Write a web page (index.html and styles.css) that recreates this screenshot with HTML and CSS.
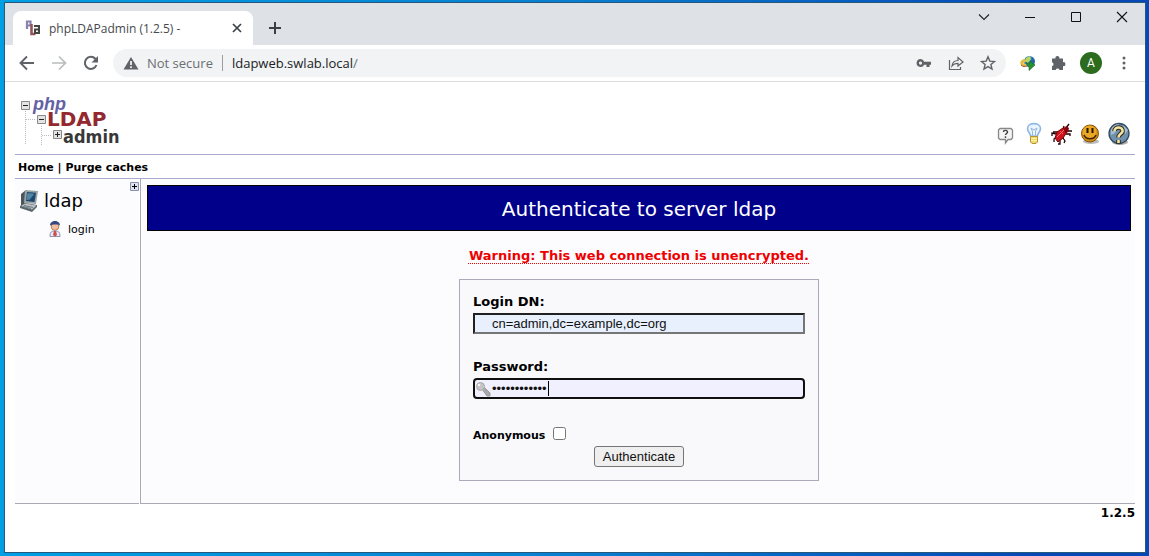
FILE: index.html
```html
<!DOCTYPE html>
<html lang="en">
<head>
<meta charset="utf-8">
<title>phpLDAPadmin (1.2.5) -</title>
<link rel="stylesheet" href="styles.css">
</head>
<body>
<div class="window">
  <header class="tabstrip">
    <div class="tab">
      <svg class="favicon" width="16" height="16" viewBox="0 0 16 16" aria-hidden="true"><path d="M2 9V1.500h3.500v4H2" fill="none" stroke="#8583ad" stroke-width="2.200"/><path d="M6.500 4v10h4" fill="none" stroke="#95545b" stroke-width="2.600"/><path d="M9 6h5v7h-4V9.500h4" fill="none" stroke="#444" stroke-width="2"/></svg>
      <span class="tab-title">phpLDAPadmin (1.2.5) -</span>
      <button class="icon-btn tab-close" aria-label="Close tab"><svg width="10" height="10" viewBox="0 0 10 10"><path d="M1 1l8 8M9 1L1 9" stroke="#3c4043" stroke-width="1.700"/></svg></button>
    </div>
    <button class="icon-btn new-tab" aria-label="New tab"><svg width="12" height="12" viewBox="0 0 12 12"><path d="M6 0v12M0 6h12" stroke="#3c4043" stroke-width="2"/></svg></button>
    <div class="window-controls">
      <button class="icon-btn" aria-label="Search tabs"><svg width="12" height="12" viewBox="0 0 12 12"><path d="M1 3.500l5 5 5-5" fill="none" stroke="#222" stroke-width="1.100"/></svg></button>
      <button class="icon-btn" aria-label="Minimize"><svg width="12" height="12" viewBox="0 0 12 12"><path d="M1 6.500h10" stroke="#111"/></svg></button>
      <button class="icon-btn" aria-label="Maximize"><svg width="12" height="12" viewBox="0 0 12 12"><path d="M1.500 1.500h9v9h-9z" fill="none" stroke="#111"/></svg></button>
      <button class="icon-btn" aria-label="Close"><svg width="12" height="12" viewBox="0 0 12 12"><path d="M1 1l10 10M11 1L1 11" stroke="#111" stroke-width="1.100"/></svg></button>
    </div>
  </header>
  <div class="toolbar">
    <button class="icon-btn" aria-label="Back"><svg width="16" height="16" viewBox="0 0 16 16"><path d="M15 8H2M8 1.500L1.500 8 8 14.500" fill="none" stroke="#5f6368" stroke-width="1.900"/></svg></button>
    <button class="icon-btn" aria-label="Forward"><svg width="16" height="16" viewBox="0 0 16 16"><path d="M1 8h13M8 1.500L14.500 8 8 14.500" fill="none" stroke="#babcbe" stroke-width="1.700"/></svg></button>
    <button class="icon-btn" aria-label="Reload"><svg width="16" height="16" viewBox="0 0 16 16"><path d="M13.500 10A6 6 0 1 1 12.300 3.800L14 5.500" fill="none" stroke="#5f6368" stroke-width="2"/><path d="M15 1v6.500H8.500z" fill="#5f6368"/></svg></button>
    <div class="omnibox">
      <svg width="16" height="14" viewBox="0 0 16 14" aria-hidden="true"><path d="M8 1l7.500 12.500H.5z" fill="#5f6368"/><path d="M8 5v4M8 10.300v1.600" stroke="#fff" stroke-width="1.600"/></svg>
      <span class="insecure">Not secure</span>
      <span class="divider"></span>
      <span class="url">ldapweb.swlab.local<span class="path">/</span></span>
      <div class="omni-icons">
        <button class="icon-btn" aria-label="Passwords"><svg width="16" height="16" viewBox="0 0 16 16"><path fill="#5f6368" fill-rule="evenodd" d="M4.500 4a4 4 0 0 1 3.700 2.700H15v3h-1.500v2.300h-3V9.700H8.200A4 4 0 1 1 4.500 4zm0 2.500a1.600 1.600 0 1 0 0 3.200 1.600 1.600 0 0 0 0-3.200z"/></svg></button>
        <button class="icon-btn" aria-label="Share"><svg width="16" height="16" viewBox="0 0 16 16"><path d="M1.500 5v9.500h11V12M4 11c.5-4 2.800-5.500 6-5.500V2.500L15 7l-5 4V8.300C7.500 8.300 5.500 9 4 11z" fill="none" stroke="#5f6368" stroke-width="1.200"/></svg></button>
        <button class="icon-btn" aria-label="Bookmark"><svg width="16" height="16" viewBox="0 0 16 16"><path d="M8 1.800l1.800 4.300 4.700.4-3.600 3 1.100 4.600L8 11.600l-4 2.500 1.100-4.600-3.600-3 4.700-.4z" fill="none" stroke="#5f6368" stroke-width="1.400"/></svg></button>
      </div>
    </div>
    <div class="extensions">
      <button class="icon-btn" aria-label="Download manager"><svg width="16" height="16" viewBox="0 0 16 16"><circle cx="9.500" cy="6.500" r="5.500" fill="#347fc4"/><path d="M6 3l4-2 1 3-3 4-3-2z" fill="#b9d957"/><path d="M12 2l3 4-2 4-2-3z" fill="#2464aa"/><path d="M5 4C1 4-1 8 1 10s4 1.500 6 1l-1-2-3-.5 3-2z" fill="#e5be45"/><path d="M1 10c2 2 4 1.500 6 1" fill="none" stroke="#a94b31"/><path d="M6 8h4V6l5 4-6 5.500V12z" fill="#27902f" stroke="#17641f" stroke-width=".6"/></svg></button>
      <button class="icon-btn" aria-label="Extensions"><svg width="16" height="16" viewBox="0 0 16 16"><path fill="#5f6368" d="M2 3.500h3.500a2 2 0 1 1 3.800 0H13v3.700a2 2 0 1 1 0 3.900V15H9.500a2 2 0 0 0-3.800 0H2v-3.800a2 2 0 0 0 0-3.900z"/></svg></button>
      <button class="avatar" aria-label="Profile">A</button>
      <button class="icon-btn" aria-label="Menu"><svg width="16" height="16" viewBox="0 0 16 16"><g fill="#5f6368"><circle cx="8" cy="3" r="1.500"/><circle cx="8" cy="8" r="1.500"/><circle cx="8" cy="13" r="1.500"/></g></svg></button>
    </div>
  </div>

  <div class="page">
    <div class="masthead">
      <svg class="logo" width="106" height="49" viewBox="0 0 106 49" role="img" aria-label="phpLDAPadmin">
        <g stroke="#bbb" stroke-dasharray="1 1"><path d="M5.500 14v34M21.500 29v19M6 22.500h10M22 38.500h10"/></g>
        <g fill="#e4e4e4" stroke="#888"><path d="M1.500 4.500h8v8h-8zM17.500 18.500h8v8h-8zM33.500 33.500h8v8h-8z"/></g>
        <path d="M3 8.500h5M19 22.500h5M35 37.500h5M37.500 35v5" stroke="#222"/>
        <text class="logo-php" x="13" y="13">php</text>
        <text class="logo-ldap" x="27" y="29">LDAP</text>
        <text class="logo-admin" x="43" y="46">admin</text>
      </svg>
      <nav class="tools" aria-label="Tools">
        <a href="#request" aria-label="Request feature"><svg width="22" height="24" viewBox="0 0 22 24"><path d="M5 6.500h11l1.500 1.500v8L16 17.500h-3L10.500 21v-3.500H5L3.500 16V8z" fill="#f4f4f4" stroke="#888" stroke-width="1.300"/><path d="M8.500 10c0-2.500 4.500-2 4 .3-.3 1-2 1.500-2 2.700M10.500 14.300V16" fill="none" stroke="#444" stroke-width="1.400"/></svg></a>
        <a href="#hint" aria-label="Light"><svg width="22" height="24" viewBox="0 0 22 24"><path d="M7.500 14c0-3-3-4-3-7.500C4.500 0 17.500 0 17.500 6.500c0 3.500-3 4.500-3 7.500z" fill="#eaf5ff" stroke="#8eb6e6" stroke-width="1.600"/><path d="M9.500 13V9.500L8 6l3 2 3-2-1.500 3.500V13" fill="none" stroke="#95b5d7"/><path d="M7.500 14.500h7V20L13 21.500H9L7.500 20z" fill="#f4d96c" stroke="#b49435"/><path d="M8 16.500h6M8 18.500h6" stroke="#fff2aa"/></svg></a>
        <a href="#bug" aria-label="Report a bug"><svg width="22" height="24" viewBox="0 0 22 24"><path d="M5 12L1 11v3M7 10H2M6 15l-3 2v3M9 18v4H7M12 8l1-4M15 6l3-4M16 9h5M15 12h4v2M12 16l2 3-1 2" fill="none" stroke="#260000" stroke-width="1.300"/><path d="M4 16l2-6 6-4h4v4l-4 6-5 4z" fill="#ce141c" stroke="#6e0008"/><path d="M6 15l7-7M9 9l3 3" stroke="#ff6666"/><path d="M13 7l2-3 3 2-1 4-3 1z" fill="#850008"/></svg></a>
        <a href="#donate" aria-label="Donate"><svg width="22" height="24" viewBox="0 0 22 24"><ellipse cx="12" cy="19.500" rx="8" ry="2.500" fill="#bbb"/><circle cx="11" cy="11.500" r="8.500" fill="#d18a12" stroke="#80500b"/><circle cx="10.500" cy="10.500" r="7" fill="#eaa724"/><path d="M8.500 6v5M13.500 6v5" stroke="#231500" stroke-width="2"/><path d="M5 13c2 5 10 5 12 0" fill="none" stroke="#3b2100" stroke-width="1.500"/></svg></a>
        <a href="#help" aria-label="Help"><svg width="24" height="24" viewBox="0 0 24 24"><ellipse cx="13" cy="20" rx="8" ry="3" fill="#aaa"/><circle cx="12" cy="11.500" r="10" fill="#6f91ae" stroke="#344b61" stroke-width="1.300"/><path d="M4 8a9 9 0 0 1 8-6l-4 9-4 2zM16 3l5 5-3 4z" fill="#a4bdcf"/><path d="M7.500 9c0-5 9-4.500 8 .5-.5 2.500-4 2.500-4 6M11.500 18v3.500" fill="none" stroke="#342c17" stroke-width="4.600"/><path d="M7.500 9c0-5 9-4.500 8 .5-.5 2.500-4 2.500-4 6M11.500 18v3" fill="none" stroke="#f2e4a4" stroke-width="2.600"/></svg></a>
      </nav>
    </div>
    <nav class="menu"><a href="#home">Home</a> | <a href="#purge">Purge caches</a></nav>
    <div class="content">
      <aside class="tree">
        <button class="expand" aria-label="Expand"><svg width="9" height="9" viewBox="0 0 9 9"><path d="M.5.500h8v8h-8z" fill="#dde3f3" stroke="#8c91a6"/><path d="M2 4.500h5M4.500 2v5" stroke="#000"/></svg></button>
        <div class="server">
          <svg width="22" height="24" viewBox="0 0 22 24" aria-hidden="true"><path d="M2 5l5-4v13l-5 4z" fill="#4c5557"/><path d="M6 1l13 1-2 13-12-1z" fill="#98a4a8"/><path d="M8 3l9 .8-1.500 9.200L7 12z" fill="#1d4869"/><path d="M8.500 4l7 .7-5 6-3 .3z" fill="#5285a6"/><path d="M1 17l5-3 12 2v2l-5 5-12-4z" fill="#5b666b"/><path d="M2 17l4-2.500 11.500 2L13 20.500z" fill="#b8c2c6"/><path d="M5 16.500l9 2M4 17.500l8 2" stroke="#6d7a80"/></svg>
          <span>ldap</span>
        </div>
        <a class="login" href="#login">
          <svg width="16" height="16" viewBox="0 0 16 16" aria-hidden="true"><circle cx="8" cy="5.500" r="3.800" fill="#f0bf9e" stroke="#b27d60"/><path d="M3 4.500c0-6 10-6 10 0l-2-1H6z" fill="#34487d"/><path d="M3 15.500c0-5 2-5.500 5-5.500s5 .5 5 5.500z" fill="#e7e9f4" stroke="#8c91ac"/><path d="M7 10h2l1 4-2 1.500L6 14z" fill="#d34b4b"/></svg>
          <span>login</span>
        </a>
      </aside>
      <main class="main">
        <h1>Authenticate to server ldap</h1>
        <p class="warning"><abbr>Warning: This web connection is unencrypted.</abbr></p>
        <form class="login-form">
          <label for="dn">Login DN:</label>
          <input class="field" id="dn" type="text" value="cn=admin,dc=example,dc=org">
          <label for="password">Password:</label>
          <div class="password-wrap">
            <input class="field password" id="password" type="password" value="abcdefghijkl">
            <svg class="key" width="16" height="16" viewBox="0 0 16 16" aria-hidden="true"><path d="M7 8l2-2 6 6v3h-3z" fill="#aaa" stroke="#999"/><circle cx="5.500" cy="5.500" r="4" fill="#c4c4c4" stroke="#aaa"/><circle cx="4" cy="4" r="1.300" fill="#f6f6f6"/></svg>
            <span class="caret"></span>
          </div>
          <div class="anonymous"><label for="anonymous">Anonymous</label><input id="anonymous" type="checkbox"></div>
          <button class="submit" type="button">Authenticate</button>
        </form>
      </main>
    </div>
    <footer class="footer">1.2.5</footer>
  </div>
</div>
</body>
</html>
```
FILE: styles.css
```css
* { box-sizing: border-box; }
body {
  margin: 0;
  min-height: 100vh;
  padding: 2px 3px 3px 4px;
  display: flex;
  background: linear-gradient(90deg, #009fe3, #087fd0 50%, #0648b8 90%, #0648b8);
  font-family: Verdana, "DejaVu Sans", sans-serif;
  color: #000;
}
a { color: inherit; text-decoration: none; }
svg { display: block; }
button { font: inherit; }
.window {
  flex: 1;
  display: flex;
  flex-direction: column;
  min-width: 0;
  border: 1px solid #26587c;
  background: #fff;
}
.icon-btn {
  display: flex;
  align-items: center;
  justify-content: center;
  padding: 0;
  border: 0;
  background: none;
}
.tabstrip {
  display: flex;
  align-items: center;
  height: 42px;
  padding: 8px 17px 0 8px;
  background: #dee1e6;
  font: 12px "Open Sans", sans-serif;
}
.tab {
  display: flex;
  align-items: center;
  width: 240px;
  height: 34px;
  padding: 0 11px 0 12px;
  border-radius: 8px 8px 0 0;
  background: #fff;
  color: #45494d;
}
.tab-title { margin-left: 8px; }
.tab-close { margin-left: auto; }
.new-tab { margin-left: 16px; }
.window-controls {
  display: flex;
  gap: 34px;
  margin: 0 0 22px auto;
}
.toolbar {
  display: flex;
  align-items: center;
  gap: 16px;
  height: 37px;
  padding: 0 13px 0 14px;
  border-bottom: 1px solid #dadce0;
  font: 13px "Open Sans", sans-serif;
}
.omnibox {
  flex: 1;
  display: flex;
  align-items: center;
  height: 28px;
  margin-left: -2px;
  padding: 0 10px;
  border-radius: 14px;
  background: #f1f3f4;
}
.insecure { margin-left: 8px; color: #6b6f73; }
.divider { width: 1px; height: 16px; margin: 0 9px; background: #9a9da1; }
.url { color: #202124; }
.path { color: #6b6f73; }
.omni-icons { display: flex; gap: 16px; margin-left: auto; }
.extensions { display: flex; align-items: center; gap: 14px; margin-left: -2px; }
.avatar {
  width: 22px;
  height: 22px;
  padding: 0;
  border: 0;
  border-radius: 50%;
  background: #2d6b1e;
  color: #fff;
  font: 12px Roboto, sans-serif;
}
.page {
  flex: 1;
  display: flex;
  flex-direction: column;
  padding: 0 10px;
}
.masthead {
  display: flex;
  justify-content: space-between;
  align-items: flex-end;
  height: 72px;
  padding: 0 4px 8px 5px;
}
.logo-php { font: italic bold 18px "Liberation Sans", sans-serif; fill: #6461a5; }
.logo-ldap { font: bold 20px "DejaVu Sans", sans-serif; fill: #94282f; }
.logo-admin { font: bold 18px "DejaVu Sans Condensed", "Liberation Sans", sans-serif; fill: #383838; }
.tools { display: flex; gap: 6px; }
.menu {
  padding: 6px 3px 4px;
  border: solid #aaaacc;
  border-width: 1px 0;
  font-size: 11px;
  font-weight: bold;
  line-height: 13px;
}
.content {
  display: flex;
  gap: 1px;
  min-height: 325px;
}
.tree {
  position: relative;
  width: 124px;
  padding: 10px 4px;
  border-bottom: 1px solid #aaaab4;
  background: #fcfcfe;
}
.expand {
  position: absolute;
  top: 3px;
  right: 0;
  padding: 0;
  border: 0;
  background: none;
}
.server {
  display: flex;
  align-items: center;
  gap: 3px;
  font-size: 18px;
  line-height: 24px;
}
.login {
  display: flex;
  align-items: center;
  gap: 5px;
  margin: 8px 0 0 28px;
  font-size: 11px;
}
.main {
  flex: 1;
  padding: 6px 4px 22px 6px;
  border: solid #aaaab4;
  border-width: 0 0 1px 1px;
  background: #fcfcfe;
}
.main h1 {
  margin: 0;
  padding: 9px 8px 7px;
  border: 1px solid #000;
  background: #00008b;
  color: #fff;
  font-size: 20px;
  font-weight: normal;
  line-height: 28px;
  text-align: center;
}
.warning {
  margin: 18px 0 16px;
  color: #e00;
  font-size: 13px;
  font-weight: bold;
  line-height: 14px;
  text-align: center;
}
.warning abbr { text-decoration: underline dotted 1px; text-underline-offset: 3px; text-decoration-skip-ink: none; }
.login-form {
  display: flex;
  flex-direction: column;
  width: 360px;
  margin: 0 auto;
  padding: 13px;
  border: 1px solid #aaaabb;
  background: #f9f9fc;
  font-size: 13px;
  font-weight: bold;
  line-height: 17px;
}
.field {
  width: 100%;
  height: 21px;
  margin: 3px 0 24px;
  padding: 1px 2px 1px 17px;
  border: 2px inset #767676;
  background: #e8f0fe;
  color: #111;
  font: 13px "Liberation Sans", sans-serif;
}
.password-wrap { position: relative; }
.password {
  display: block;
  border: 2px solid #101010;
  border-radius: 4px;
  background: #f0f0ff;
}
.key { position: absolute; top: 6px; left: 2px; }
.caret {
  position: absolute;
  top: 6px;
  left: 75px;
  width: 1px;
  height: 15px;
  background: #000;
}
.anonymous {
  display: flex;
  align-items: center;
  gap: 8px;
  margin-bottom: 2px;
  font-size: 11px;
}
.anonymous label { padding-top: 4px; }
.anonymous input { width: 13px; height: 13px; margin: 0; }
.submit {
  align-self: center;
  width: 90px;
  height: 21px;
  padding: 0;
  border: 1px solid #767676;
  border-radius: 3px;
  background: #efefef;
  color: #111;
  font: 13px "Liberation Sans", sans-serif;
}
.footer {
  padding-top: 1px;
  font-size: 12px;
  font-weight: bold;
  line-height: 17px;
  text-align: right;
}
```
